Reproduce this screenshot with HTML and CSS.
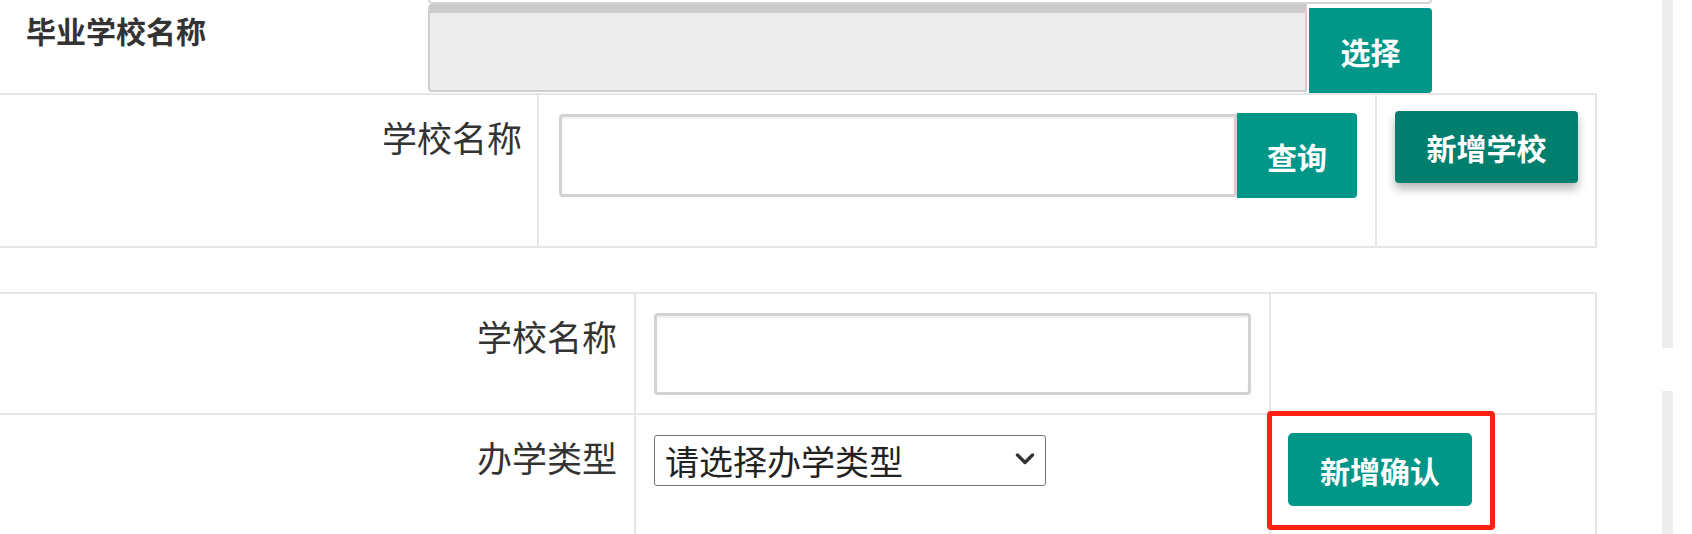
FILE: index.html
```html
<!DOCTYPE html>
<html lang="zh-CN">
<head>
    <meta charset="UTF-8">
    <meta name="viewport" content="width=device-width, initial-scale=1.0">
    <title>新增学校</title>
    <link rel="stylesheet" href="styles.css">
</head>
<body>
<div class="page">
    <div class="main">
        <div class="grad-row">
            <div class="grad-label">毕业学校名称</div>
            <div class="grad-field">
                <div class="prev-box"></div>
                <div class="input-group">
                    <input class="input input-readonly" type="text" readonly>
                    <button class="btn btn-addon btn-pick">选择</button>
                </div>
            </div>
        </div>

        <div class="form-grid search-grid">
            <div class="cell label-cell">学校名称</div>
            <div class="cell field-cell">
                <div class="input-group">
                    <input class="input input-search" type="text">
                    <button class="btn btn-addon btn-query">查询</button>
                </div>
            </div>
            <div class="cell action-cell">
                <button class="btn btn-raised">新增学校</button>
            </div>
        </div>

        <div class="form-grid add-grid">
            <div class="cell label-cell">学校名称</div>
            <div class="cell field-cell">
                <input class="input input-name" type="text">
            </div>
            <div class="cell action-cell"></div>

            <div class="cell label-cell row-last">办学类型</div>
            <div class="cell field-cell row-last">
                <span class="select-wrap">
                    <select class="select">
                        <option>请选择办学类型</option>
                        <option>公办</option>
                        <option>民办</option>
                    </select>
                    <svg class="chevron" width="20" height="12" viewBox="0 0 20 12">
                        <polyline points="2.5,2 10,9.5 17.5,2" fill="none" stroke="#333" stroke-width="3.4" stroke-linecap="round" stroke-linejoin="round"/>
                    </svg>
                </span>
            </div>
            <div class="cell action-cell row-last">
                <span class="marked">
                    <button class="btn btn-confirm">新增确认</button>
                </span>
            </div>
        </div>
    </div>

    <div class="scroll-track">
        <div class="track-top"></div>
        <div class="track-bottom"></div>
    </div>
</div>
</body>
</html>
```

FILE: styles.css
```css
body {
    margin: 0;
    font-family: "Noto Sans CJK SC", "Liberation Sans", sans-serif;
    color: #333;
    background: #fff;
    overflow: hidden;
}
.page {
    display: flex;
    align-items: flex-start;
    height: 534px;
}
.main { width: 1597px; flex-shrink: 0; }

/* top row */
.grad-row {
    display: flex;
    height: 93px;
    border-bottom: 2px solid #e6e6e6;
}
.grad-label {
    width: 402px;
    flex-shrink: 0;
    padding: 9px 0 0 26px;
    font-size: 30px;
    font-weight: bold;
    line-height: 1.45;
    color: #333;
}
.grad-field { width: 1004px; }
.prev-box {
    width: 1000px;
    height: 2px;
    border: 2px solid #d6d6d6;
    border-top: none;
    border-radius: 0 0 4px 4px;
}

.input-group { display: flex; align-items: flex-start; }
.input {
    box-sizing: border-box;
    border: 3px solid #d2d2d2;
    border-radius: 4px;
    background: #fff;
    box-shadow: inset 0 2px 2px rgba(0,0,0,0.06);
    font-family: inherit;
    font-size: 30px;
    padding: 0 10px;
    outline: none;
}
.input-readonly {
    flex: 1;
    height: 88px;
    background: #ededed;
    border: 2px solid #cfcfcf;
    border-top: 9px solid #cbcbcb;
    border-radius: 4px 0 0 4px;
    box-shadow: none;
}
.input-search {
    flex: 1;
    height: 83px;
    margin-top: 1px;
    border-radius: 4px 0 0 4px;
}
.input-name { width: 597px; height: 82px; }

.btn {
    border: none;
    background: #009688;
    color: #fff;
    font-family: inherit;
    font-size: 30px;
    font-weight: bold;
    line-height: 1;
    border-radius: 4px;
    padding: 0;
    cursor: pointer;
}
.btn-addon { border-radius: 0 4px 4px 0; }
.btn-pick { width: 123px; height: 85px; margin: 4px 0 0 2px; }
.btn-query { width: 120px; height: 85px; }
.btn-raised {
    width: 183px;
    height: 72px;
    background: #007f6f;
    box-shadow: 0 6px 10px rgba(0,0,0,0.28);
}
.btn-confirm { width: 184px; height: 73px; border-radius: 5px; }

/* tables */
.form-grid { display: grid; }
.search-grid {
    grid-template-columns: 539px 838px 220px;
    grid-auto-rows: 153px;
}
.add-grid {
    margin-top: 44px;
    border-top: 2px solid #e6e6e6;
    grid-template-columns: 636px 635px 326px;
    grid-template-rows: 121px 130px;
}
.cell {
    box-sizing: border-box;
    border-right: 2px solid #e6e6e6;
    border-bottom: 2px solid #e6e6e6;
}
.row-last { border-bottom: none; }
.label-cell {
    text-align: right;
    padding: 17px 15px 0 0;
    font-size: 35px;
    line-height: 1.45;
    color: #333;
}
.add-grid .label-cell { padding-right: 17px; }
.search-grid .field-cell { padding: 18px 18px 0 20px; }
.search-grid .action-cell { padding: 16px 0 0 18px; }
.add-grid .field-cell { padding: 19px 0 0 18px; }
.add-grid .row-last.field-cell { padding-top: 20px; }
.add-grid .action-cell { padding: 18px 0 0 17px; }

.select-wrap {
    position: relative;
    display: inline-block;
    vertical-align: top;
}
.select {
    appearance: none;
    -webkit-appearance: none;
    box-sizing: border-box;
    width: 392px;
    height: 51px;
    padding: 0 40px 0 10px;
    border: 1px solid #767676;
    border-radius: 3px;
    background: #fff;
    color: #222;
    font-family: inherit;
    font-size: 34px;
    line-height: 1;
    outline: none;
}
.chevron {
    position: absolute;
    right: 11px;
    top: 18px;
    pointer-events: none;
}

/* red annotation around the confirm button */
.marked {
    position: relative;
    display: inline-block;
    vertical-align: top;
}
.marked .btn { display: block; }
.marked::after {
    content: "";
    position: absolute;
    left: -21px;
    top: -22px;
    right: -23px;
    bottom: -24px;
    border: 5px solid #ff2214;
    border-radius: 4px;
    pointer-events: none;
}

.scroll-track { margin-left: 65px; width: 11px; }
.track-top { height: 348px; background: #ececec; }
.track-bottom { height: 143px; margin-top: 43px; background: #ececec; }
```
